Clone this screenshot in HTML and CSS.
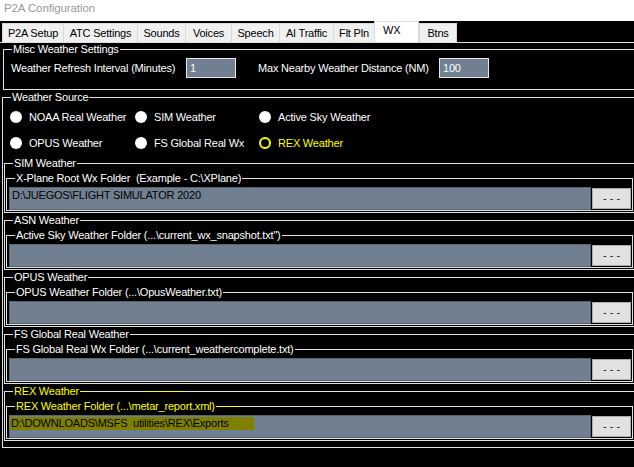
FILE: index.html
```html
<!DOCTYPE html>
<html>
<head>
<meta charset="utf-8">
<link rel="stylesheet" href="styles.css">
</head>
<body>
<div class="titlebar">P2A Configuration</div>
<div class="tabs">
  <div class="tab">P2A Setup</div>
  <div class="tab">ATC Settings</div>
  <div class="tab">Sounds</div>
  <div class="tab">Voices</div>
  <div class="tab">Speech</div>
  <div class="tab">AI Traffic</div>
  <div class="tab">Flt Pln</div>
  <div class="tab active">WX</div>
  <div class="tab last">Btns</div>
</div>
<div class="page">
  <div class="group misc">
    <div class="head"><span class="corner"></span><span class="title">Misc Weather Settings</span><span class="rule"></span></div>
    <div class="body misc-body">
      <span class="lbl lbl-refresh">Weather Refresh Interval (Minutes)</span>
      <span class="input">1</span>
      <span class="lbl lbl-dist">Max Nearby Weather Distance (NM)</span>
      <span class="input">100</span>
    </div>
  </div>

  <div class="group source">
    <div class="head"><span class="corner"></span><span class="title">Weather Source</span><span class="rule"></span></div>
    <div class="body source-body">
      <div class="radios">
        <div class="radio"><span class="dot"></span>NOAA Real Weather</div>
        <div class="radio"><span class="dot"></span>SIM Weather</div>
        <div class="radio"><span class="dot"></span>Active Sky Weather</div>
        <div class="radio"><span class="dot"></span>OPUS Weather</div>
        <div class="radio"><span class="dot"></span>FS Global Real Wx</div>
        <div class="radio selected"><span class="dot"></span>REX Weather</div>
      </div>

      <div class="group section">
        <div class="head"><span class="corner"></span><span class="title">SIM Weather</span><span class="rule"></span></div>
        <div class="body section-body">
          <div class="group folder">
            <div class="head"><span class="corner"></span><span class="title">X-Plane Root Wx Folder&nbsp; (Example - C:\XPlane)</span><span class="rule"></span></div>
            <div class="body folder-body">
              <div class="textbox">D:\JUEGOS\FLIGHT SIMULATOR 2020</div>
              <div class="btn">- - -</div>
            </div>
          </div>
        </div>
      </div>

      <div class="group section">
        <div class="head"><span class="corner"></span><span class="title">ASN Weather</span><span class="rule"></span></div>
        <div class="body section-body">
          <div class="group folder">
            <div class="head"><span class="corner"></span><span class="title">Active Sky Weather Folder (...\current_wx_snapshot.txt")</span><span class="rule"></span></div>
            <div class="body folder-body">
              <div class="textbox"></div>
              <div class="btn">- - -</div>
            </div>
          </div>
        </div>
      </div>

      <div class="group section">
        <div class="head"><span class="corner"></span><span class="title">OPUS Weather</span><span class="rule"></span></div>
        <div class="body section-body">
          <div class="group folder">
            <div class="head"><span class="corner"></span><span class="title">OPUS Weather Folder (...\OpusWeather.txt)</span><span class="rule"></span></div>
            <div class="body folder-body">
              <div class="textbox"></div>
              <div class="btn">- - -</div>
            </div>
          </div>
        </div>
      </div>

      <div class="group section">
        <div class="head"><span class="corner"></span><span class="title">FS Global Real Weather</span><span class="rule"></span></div>
        <div class="body section-body">
          <div class="group folder">
            <div class="head"><span class="corner"></span><span class="title">FS Global Real Wx Folder (...\current_weathercomplete.txt)</span><span class="rule"></span></div>
            <div class="body folder-body">
              <div class="textbox"></div>
              <div class="btn">- - -</div>
            </div>
          </div>
        </div>
      </div>

      <div class="group section rex">
        <div class="head"><span class="corner"></span><span class="title">REX Weather</span><span class="rule rule-rex"></span></div>
        <div class="body section-body">
          <div class="group folder rex">
            <div class="head"><span class="corner"></span><span class="title">REX Weather Folder (...\metar_report.xml)</span><span class="rule rule-rexfolder"></span></div>
            <div class="body folder-body">
              <div class="textbox"><span class="sel">D:\DOWNLOADS\MSFS  utilities\REX\Exports</span></div>
              <div class="btn">- - -</div>
            </div>
          </div>
        </div>
      </div>
    </div>
  </div>
</div>
</body>
</html>
```
FILE: styles.css
```css
html, body {
  margin: 0;
  padding: 0;
  width: 634px;
  height: 467px;
  overflow: hidden;
  background: #000;
  font-family: "Liberation Sans", Arial, sans-serif;
  font-size: 11px;
  letter-spacing: -0.2px;
  color: #fff;
}

.titlebar {
  height: 21px;
  background: #fff;
  color: #999;
  font-size: 11.5px;
  letter-spacing: -0.1px;
  line-height: 17px;
  padding-left: 4px;
  box-sizing: border-box;
}

.tabs {
  height: 21px;
  display: flex;
  align-items: flex-end;
  padding-left: 2px;
  background: #000;
}

.tab {
  height: 19px;
  box-sizing: border-box;
  background: #f0f0f0;
  border-left: 1px solid #d9d9d9;
  border-top: 1px solid #d9d9d9;
  color: #000;
  text-align: center;
  line-height: 18px;
  white-space: nowrap;
}
.tab:nth-child(1) { width: 61px; }
.tab:nth-child(2) { width: 74px; }
.tab:nth-child(3) { width: 48px; }
.tab:nth-child(4) { width: 46px; }
.tab:nth-child(5) { width: 48px; }
.tab:nth-child(6) { width: 54px; }
.tab:nth-child(7) { width: 41px; }
.tab:nth-child(8) { width: 45px; }
.tab:nth-child(9) { width: 38px; }
.tab.last { border-right: 1px solid #d9d9d9; }
.tab.active {
  height: 21px;
  background: #fff;
  border-right: 1px solid #d9d9d9;
  line-height: 16px;
  text-align: left;
  padding-left: 8px;
}

.page {
  width: 640px;
  border-top: 1px solid #e0e0e0;
}

/* group box */
.group { display: flex; flex-direction: column; }
.head { display: flex; height: 13px; }
.corner {
  width: 8px;
  margin-top: 6px;
  border-left: 1px solid #e0e0e0;
  border-top: 1px solid #e0e0e0;
}
.title {
  padding: 0 1px;
  line-height: 13px;
  white-space: nowrap;
}
.rule {
  flex: 1;
  margin-top: 6px;
  border-top: 1px solid #e0e0e0;
  border-right: 1px solid #e0e0e0;
}
.body {
  border: 1px solid #e0e0e0;
  border-top: none;
}

.misc { margin-left: 3px; margin-bottom: 1px; }
.misc-body {
  display: flex;
  align-items: center;
  padding: 2px 0 11px 7px;
}
.lbl { white-space: nowrap; }
.lbl-refresh { width: 175px; }
.lbl-dist { width: 181px; margin-left: 22px; }
.input {
  width: 50px;
  height: 20px;
  box-sizing: border-box;
  background: #708090;
  border: 1px solid #e6e6e6;
  color: #fff;
  line-height: 18px;
  padding-left: 3px;
}

.source { margin-left: 2px; }
.source-body { padding-bottom: 5px; }

.radios {
  display: grid;
  grid-template-columns: 125px 124px 1fr;
  grid-auto-rows: 26px;
  padding-left: 7px;
  margin-bottom: 1px;
}
.radio {
  display: flex;
  align-items: center;
  gap: 7px;
  white-space: nowrap;
}
.dot {
  width: 12px;
  height: 12px;
  border-radius: 50%;
  background: #fff;
  box-sizing: border-box;
  flex: none;
  margin-top: -1px;
}
.radio.selected { color: #ff0; }
.radio.selected .dot {
  background: #000;
  border: 2px solid #ff0;
}

.section { margin-left: 1px; margin-bottom: 1px; }
.section-body { padding: 2px 0 1px 1px; }
.folder { width: 627px; }
.folder-body {
  display: flex;
  align-items: center;
  gap: 1px;
  padding: 2px 1px 0 2px;
}
.textbox {
  width: 582px;
  height: 23px;
  box-sizing: border-box;
  background: #708090;
  border: 1px solid #5a646e;
  color: #000;
  line-height: 13px;
  padding: 1px 0 0 0;
  white-space: pre;
}
.btn {
  width: 39px;
  height: 21px;
  box-sizing: border-box;
  background: #e1e1e1;
  border: 1px solid #adadad;
  color: #222;
  text-align: center;
  line-height: 18px;
  letter-spacing: 0;
}
.textbox:not(:has(.sel)) { padding-left: 2px; }
.sel {
  display: inline-block;
  width: 245px;
  height: 13px;
  background: #808000;
  padding-left: 2px;
  box-sizing: border-box;
  margin-left: -1px;
}

.rex .title { color: #ff0; }
.rule-rex {
  border-top: none;
  background: linear-gradient(to right, #ff0 0 9px, #e0e0e0 9px 66px, #ff0 66px 102px, #e0e0e0 102px) top left / 100% 1px no-repeat;
}
.rule-rexfolder {
  border-top: none;
  background: linear-gradient(to right, #ff0 0 24px, #e0e0e0 24px) top left / 100% 1px no-repeat;
}
```
